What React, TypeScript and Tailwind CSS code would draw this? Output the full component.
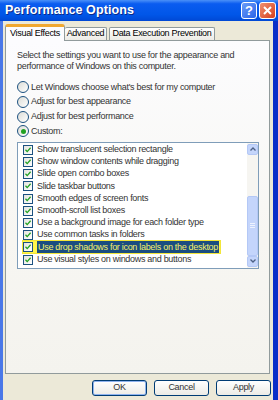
import React, { useState } from "react";

const font = { fontFamily: '"Liberation Sans", Arial, sans-serif' };

const effects = [
  "Show translucent selection rectangle",
  "Show window contents while dragging",
  "Slide open combo boxes",
  "Slide taskbar buttons",
  "Smooth edges of screen fonts",
  "Smooth-scroll list boxes",
  "Use a background image for each folder type",
  "Use common tasks in folders",
  "Use drop shadows for icon labels on the desktop",
  "Use visual styles on windows and buttons",
];

const radios = [
  "Let Windows choose what's best for my computer",
  "Adjust for best appearance",
  "Adjust for best performance",
  "Custom:",
];

const Check = () => (
  <svg width="8" height="8" viewBox="0 0 8 8">
    <path d="M1.5 3.8 L3.2 5.6 L6.6 1.8" stroke="#21a121" strokeWidth="1.3" fill="none" />
  </svg>
);

const App = () => {
  const [mode, setMode] = useState(3);

  return (
    <div className="w-[278px] h-[400px] flex flex-col bg-[#0a3fd0] overflow-hidden" style={font}>
      {/* Title bar */}
      <div className="h-[21px] flex items-center pl-[5px] pr-[2px] bg-[linear-gradient(180deg,#4a90f8_0%,#0a5cf0_18%,#0056e8_70%,#0048d4_100%)]">
        <span className="flex-1 text-white font-bold text-[12.5px] tracking-[0.1px] [text-shadow:1px_1px_0_#0a2a8a]">
          Performance Options
        </span>
        <div className="w-[16px] h-[17px] rounded-[3px] border border-white bg-[linear-gradient(135deg,#6b9cf8,#2a64e8)] flex items-center justify-center text-white font-bold text-[13px] leading-none">
          ?
        </div>
        <div className="ml-[2px] w-[17px] h-[17px] rounded-[3px] border border-white bg-[linear-gradient(135deg,#f09070,#d6401e)] flex items-center justify-center">
          <svg width="9" height="9" viewBox="0 0 9 9">
            <path d="M1 1 L8 8 M8 1 L1 8" stroke="white" strokeWidth="2" />
          </svg>
        </div>
      </div>

      {/* Body */}
      <div className="flex-1 flex flex-col bg-[#ece9d8] border-l-[3px] border-l-[#4a78e8] border-r-[5px] border-r-[#0a2ec8] pl-[2px] pr-[1px] pt-[3px] text-[9px] tracking-[-0.3px] whitespace-nowrap">
        {/* Tabs */}
        <div className="flex items-end h-[16px] text-black">
          <div className="relative z-10 w-[60px] h-[17px] -mb-px flex items-center justify-center bg-[#fcfcfe] border border-[#919b9c] border-b-0 border-t-[3px] border-t-[#f0a830] rounded-t-[3px]">
            Visual Effects
          </div>
          <div className="w-[42px] h-[13px] flex items-center justify-center bg-[linear-gradient(180deg,#ffffff,#ecebe5)] border border-[#919b9c] border-b-0 border-l-0 rounded-t-[2px]">
            Advanced
          </div>
          <div className="w-[106px] h-[13px] ml-[2px] flex items-center justify-center bg-[linear-gradient(180deg,#ffffff,#ecebe5)] border border-[#919b9c] border-b-0 rounded-t-[2px]">
            Data Execution Prevention
          </div>
        </div>

        {/* Panel */}
        <div className="h-[334px] mr-[2px] border border-[#919b9c] bg-[linear-gradient(180deg,#fcfcfe_0%,#f7f6f2_60%,#f4f3ee_100%)] pt-[9px] pl-[11px] pr-[10px] text-[#333]">
          <p className="leading-[11px]">
            Select the settings you want to use for the appearance and
            <br />
            performance of Windows on this computer.
          </p>

          <div className="mt-[8px] flex flex-col">
            {radios.map((r, i) => (
              <label key={r} className="h-[14.7px] flex items-center gap-[2px] cursor-pointer" onClick={() => setMode(i)}>
                <span className="w-[12px] h-[12px] rounded-full border border-[#1c5180] bg-[linear-gradient(135deg,#dcdcd6,#ffffff)] flex items-center justify-center">
                  {mode === i && <span className="w-[5px] h-[5px] rounded-full bg-[#21a121]" />}
                </span>
                <span>{r}</span>
              </label>
            ))}
          </div>

          {/* List box */}
          <div className="mt-[3px] h-[127px] border border-[#7f9db9] bg-white flex">
            <div className="flex-1 pt-px pl-[5px]">
              {effects.map((e) => {
                const sel = e.startsWith("Use drop");
                return (
                  <div
                    key={e}
                    className={`h-[12.2px] flex items-center gap-[4px] w-fit pr-px ${sel ? "bg-[#fff64a] outline outline-[#f2e63a]" : ""}`}
                  >
                    <span className="w-[10px] h-[10px] border border-[#1c5180] bg-[linear-gradient(135deg,#e4e4de,#ffffff)] flex items-center justify-center">
                      <Check />
                    </span>
                    <span className={sel ? "bg-[#1b4d80] text-[#f4f06a] px-px" : ""}>{e}</span>
                  </div>
                );
              })}
            </div>

            {/* Scrollbar */}
            <div className="w-[11px] flex flex-col bg-[#f6f5f1] py-px">
              <div className="h-[11px] rounded-[2px] bg-[#c4d5fb] border border-[#b4c8f6] flex items-center justify-center">
                <svg width="6" height="4" viewBox="0 0 6 4">
                  <path d="M0.5 3.5 L3 1 L5.5 3.5" stroke="#4d6185" strokeWidth="1.3" fill="none" />
                </svg>
              </div>
              <div className="h-[41px]" />
              <div className="flex-1 rounded-[2px] bg-[#c4d5fb] border border-[#b4c8f6] flex flex-col items-center justify-center gap-px">
                <span className="w-[5px] h-px bg-[#eef3fe]" />
                <span className="w-[5px] h-px bg-[#eef3fe]" />
                <span className="w-[5px] h-px bg-[#eef3fe]" />
              </div>
              <div className="h-[11px] rounded-[2px] bg-[#c4d5fb] border border-[#b4c8f6] flex items-center justify-center">
                <svg width="6" height="4" viewBox="0 0 6 4">
                  <path d="M0.5 0.5 L3 3 L5.5 0.5" stroke="#4d6185" strokeWidth="1.3" fill="none" />
                </svg>
              </div>
            </div>
          </div>
        </div>

        {/* Buttons */}
        <div className="mt-[6px] flex justify-end gap-[7px] pr-[1px] text-[#333]">
          <button className="w-[55px] h-[16px] rounded-[3px] border border-[#003c74] bg-[linear-gradient(180deg,#ffffff,#ecebe6)] shadow-[inset_0_0_0_1px_#8fb3ef]">
            OK
          </button>
          <button className="w-[55px] h-[16px] rounded-[3px] border border-[#003c74] bg-[linear-gradient(180deg,#ffffff,#ecebe6)]">
            Cancel
          </button>
          <button className="w-[55px] h-[16px] rounded-[3px] border border-[#003c74] bg-[linear-gradient(180deg,#ffffff,#ecebe6)]">
            Apply
          </button>
        </div>
      </div>
    </div>
  );
};

export default App;
